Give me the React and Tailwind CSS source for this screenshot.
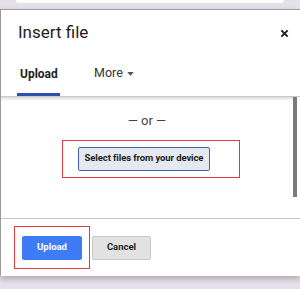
export default function App() {
  return (
    <div className="w-[300px] h-[289px] overflow-hidden bg-[#e6e0eb] font-['Roboto',sans-serif]">
      {/* page behind the dialog */}
      <div className="h-[9px] px-[16px]">
        <div className="h-[3px] bg-white rounded-b-[4px]" />
      </div>

      {/* dialog */}
      <div className="h-[267px] bg-white border-t border-l border-[#9a9a9a] shadow-[0_3px_6px_rgba(0,0,0,0.25)] flex flex-col">
        {/* header */}
        <div className="h-[44px] pt-[2px] pl-[17px] pr-[11px] flex items-center justify-between">
          <span className="text-[17px] text-[#222]">Insert file</span>
          <svg width="9" height="9" viewBox="0 0 10 10">
            <path d="M1.5 1.5 L8.5 8.5 M8.5 1.5 L1.5 8.5" stroke="#222" strokeWidth="2.2" />
          </svg>
        </div>

        {/* tabs */}
        <div className="h-[43px] flex items-stretch pl-[16px] border-b border-[#c8c8c8]">
          <div className="w-[43px] flex flex-col">
            <div className="flex-1 flex items-center pl-[3px] text-[12px] font-bold text-[#222]">Upload</div>
            <div className="h-[3px] bg-[#2f4fb0]" />
          </div>
          <div className="ml-[34px] flex items-center text-[12.5px] text-[#333] pb-[3px]">
            More
            <svg width="7" height="4" viewBox="0 0 8 5" className="ml-[4px]">
              <path d="M0 0 L8 0 L4 5 Z" fill="#555" />
            </svg>
          </div>
        </div>

        {/* scroll area */}
        <div className="h-[121px] flex">
          <div className="flex-1 flex flex-col items-center bg-gradient-to-b from-[#dcdcdc] via-white via-[4px] to-white">
            <div className="mt-[14px] text-[13px] text-[#444]">— or —</div>
            <div className="mt-[9px] ml-[8px] w-[178px] h-[38px] shrink-0 border-[1.5px] border-[#e03a44] flex items-center pl-[15px]">
              <div className="w-[132px] h-[24px] shrink-0 rounded-[2px] bg-[#e6e8ef] border border-[#3f5fb5] flex items-center justify-center whitespace-nowrap text-[9.5px] tracking-[-0.1px] font-bold text-[#222]">
                Select files from your device
              </div>
            </div>
          </div>
          <div className="w-[7px] pr-[3px]">
            <div className="h-[100px] bg-[#7a7a7a]" />
          </div>
        </div>

        {/* footer */}
        <div className="flex-1 border-t border-[#c4c4c4] flex items-center pl-[13px] gap-[2px]">
          <div className="w-[76px] h-[43px] border-[1.5px] border-[#e03a44] flex items-center justify-center">
            <div className="w-[60px] h-[24px] rounded-[2px] bg-[#3d7cf6] flex items-center justify-center text-[9.5px] font-bold text-white">
              Upload
            </div>
          </div>
          <div className="w-[59px] h-[24px] rounded-[2px] bg-[#e2e2e2] border border-[#c6c6c6] flex items-center justify-center text-[9.5px] font-bold text-[#222]">
            Cancel
          </div>
        </div>
      </div>
    </div>
  );
}
